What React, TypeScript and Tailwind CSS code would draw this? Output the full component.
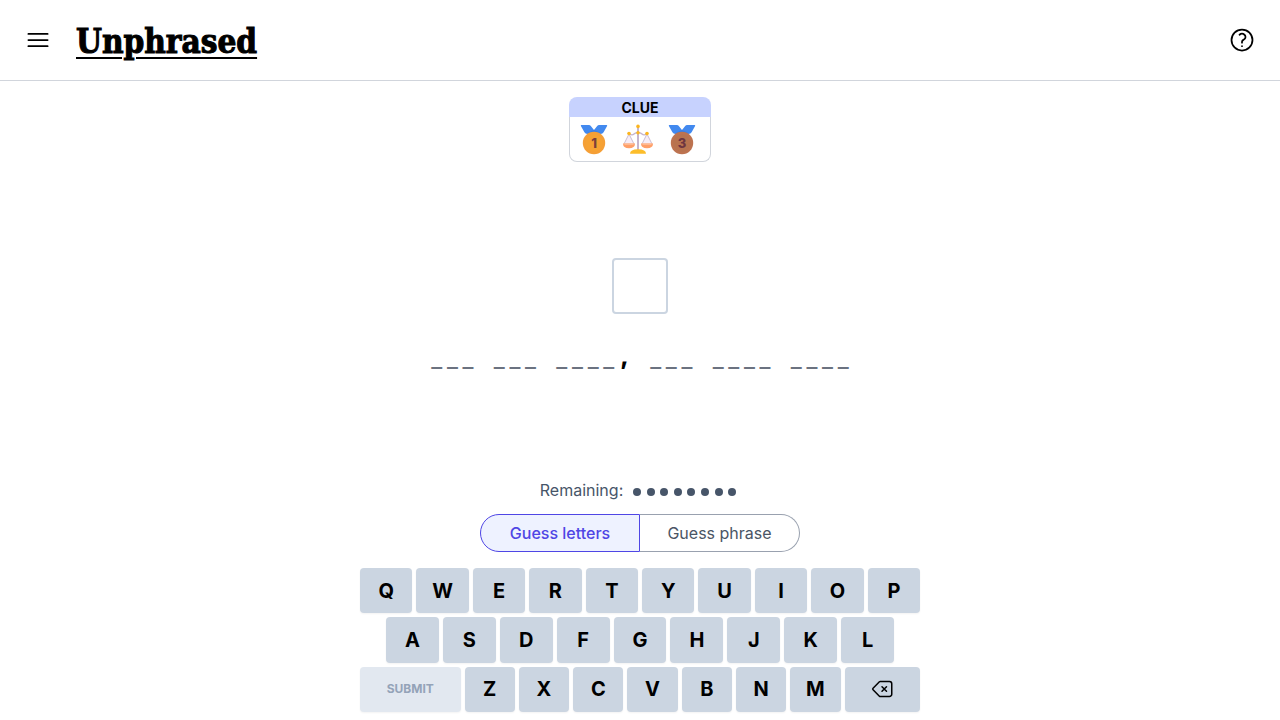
import type { ReactNode } from 'react';

function OutlineIcon({ d, className }: { d: string; className: string }) {
  return (
    <svg viewBox="0 0 24 24" fill="none" stroke="currentColor" strokeWidth="1.5" strokeLinecap="round" strokeLinejoin="round" className={className} aria-hidden="true">
      <path d={d} />
    </svg>
  );
}

const MENU = 'M3.75 6.75h16.5M3.75 12h16.5m-16.5 5.25h16.5';
const HELP =
  'M9.879 7.519c1.171-1.025 3.071-1.025 4.242 0 1.172 1.025 1.172 2.687 0 3.712-.203.179-.43.326-.67.442-.745.361-1.45.999-1.45 1.827v.75M21 12a9 9 0 1 1-18 0 9 9 0 0 1 18 0Zm-9 5.25h.008v.008H12v-.008Z';
const BACKSPACE =
  'M12 9.75 14.25 12m0 0 2.25 2.25M14.25 12l2.25-2.25M14.25 12 12 14.25m-2.58 4.92-6.374-6.375a1.125 1.125 0 0 1 0-1.59L9.42 4.83c.21-.211.497-.33.795-.33H19.5a2.25 2.25 0 0 1 2.25 2.25v10.5a2.25 2.25 0 0 1-2.25 2.25h-9.284c-.298 0-.585-.119-.795-.33Z';

type MedalProps = { place: string; rim: string; face: string; ink: string };

function Medal({ place, rim, face, ink }: MedalProps) {
  return (
    <svg viewBox="0 0 32 32" className="size-8" role="img" aria-label={`Medal ${place}`}>
      <path d="M3.4 2H11q1 0 1.600.8L16 7l3.400-4.200Q20 2 21 2h7.600q.9 0 .5.9l-3.500 6.400Q24.600 11 22.600 11H9.400q-2 0-3-1.700L2.900 2.900Q2.500 2 3.400 2Z" fill="#4289ef" />
      <path d="M10 9.500 16 7l6 2.500-6 2Z" fill="#2f6fd8" opacity=".4" />
      <circle cx="16" cy="20" r="11.200" fill={rim} />
      <circle cx="16" cy="20" r="8.800" fill={face} />
      <text x="16" y="24.600" textAnchor="middle" fontSize="13" fontWeight="800" fill={ink}>{place}</text>
    </svg>
  );
}

function Scales() {
  return (
    <svg viewBox="0 0 32 32" className="size-8" role="img" aria-label="Balance scale">
      <path d="M7 11 2.500 21h9L7 11ZM25 11l-4.500 10h9L25 11Z" fill="#f6edf7" />
      <g fill="none" stroke="#c5b4cc" strokeLinecap="round">
        <path d="M16 4v23" strokeWidth="2" />
        <path d="M7 10.500q3 2.500 5 .500t4-1q2-1 4 1t5-.500" strokeWidth="1.400" />
        <path d="M7 11 2 21M7 11l5 10M25 11l-5 10M25 11l5 10" strokeWidth=".9" />
      </g>
      <path d="M1 20.500h12q0 4.800-6 4.800t-6-4.800ZM19 20.500h12q0 4.800-6 4.800t-6-4.800Z" fill="#ff9f68" />
      <path d="M1.500 20.500h11l-1.500 1.600H3ZM19.500 20.500h11l-1.500 1.600h-8Z" fill="#ffb88f" />
      <path d="M8 30.800q0-4.600 8-4.600t8 4.600Z" fill="#fcbd2a" />
      <circle cx="16" cy="3.400" r="1.800" fill="#fcb51f" />
      <circle cx="16" cy="9.800" r="1.700" fill="#fcb51f" />
      <circle cx="7" cy="10.500" r="1.800" fill="#fcb51f" />
      <circle cx="25" cy="10.500" r="1.800" fill="#fcb51f" />
    </svg>
  );
}

function Key({ children, className = 'flex-1 bg-[#cbd5e1] text-xl text-black', label, disabled }: { children: ReactNode; className?: string; label?: string; disabled?: boolean }) {
  return (
    <button type="button" aria-label={label} disabled={disabled} className={`flex min-w-0 basis-0 items-center justify-center rounded font-bold shadow-xs ${className}`}>
      {children}
    </button>
  );
}

const PHRASE = '___ ___ ____, ___ ____ ____';
const REMAINING = 8;

export default function App() {
  return (
    <div className="flex min-h-screen flex-col bg-white font-['Inter',sans-serif] text-black">
      <header className="flex h-[81px] items-center gap-6 border-b border-gray-300 px-6">
        <button type="button" aria-label="Menu">
          <OutlineIcon d={MENU} className="size-7" />
        </button>
        <h1 className="flex-1 pt-1 font-['DejaVu_Serif_Condensed','DejaVu_Serif',serif] text-[33px] leading-10 font-bold [-webkit-text-stroke:1px_black]">
          <a href="#" className="underline decoration-2 underline-offset-4">Unphrased</a>
        </h1>
        <button type="button" aria-label="How to play">
          <OutlineIcon d={HELP} className="size-7" />
        </button>
      </header>

      <main className="flex flex-1 flex-col items-center px-2 pt-4 pb-2">
        <section>
          <h2 className="h-5 rounded-t-lg bg-[#c7d2fe] text-center text-sm leading-[22px] font-bold">CLUE</h2>
          <div className="flex gap-3 rounded-b-lg border border-t-0 border-gray-300 py-1.5 pr-3 pl-2">
            <Medal place="1" rim="#f59f36" face="#f6a233" ink="#7c3f3a" />
            <Scales />
            <Medal place="3" rim="#bd7350" face="#b8734f" ink="#6e3540" />
          </div>
        </section>

        <section className="flex flex-1 flex-col items-center justify-center gap-7 pb-1.5">
          <input aria-label="Letter guess" maxLength={1} className="size-14 rounded border-2 border-[#cbd5e1] text-center text-2xl font-bold" />
          <p className="grid w-[422px] grid-cols-27 text-center text-2xl leading-[34px] font-extrabold">
            {PHRASE.split('').map((char, i) => (
              <span key={i} className={char === '_' ? 'font-normal text-[#6b7280]' : 'leading-7'}>{char}</span>
            ))}
          </p>
        </section>

        <div className="flex items-center gap-2.5 pr-1 leading-6 text-[#475569]">
          <span>Remaining:</span>
          <span className="flex w-[103px] justify-between pt-1" role="img" aria-label="8 guesses">
            {Array.from({ length: REMAINING }, (_, i) => (
              <span key={i} className="size-2 rounded-full bg-[#475569]" />
            ))}
          </span>
        </div>

        <div className="mt-3 grid h-[38px] w-full max-w-80 grid-cols-2">
          <button type="button" aria-pressed="true" className="rounded-l-full border border-[#4f46e5] bg-[#eef2ff] font-medium text-[#4f46e5]">Guess letters</button>
          <button type="button" aria-pressed="false" className="rounded-r-full border border-l-0 border-gray-400 text-gray-600">Guess phrase</button>
        </div>

        <div className="mt-4 grid h-36 w-full max-w-[560px] grid-rows-3 gap-1">
          <div className="flex gap-1">
            {'QWERTYUIOP'.split('').map((k) => <Key key={k}>{k}</Key>)}
          </div>
          <div className="flex gap-1 px-[26px]">
            {'ASDFGHJKL'.split('').map((k) => <Key key={k}>{k}</Key>)}
          </div>
          <div className="flex gap-1">
            <Key disabled className="flex-2 bg-[#e2e8f0] text-xs text-[#94a3b8]">SUBMIT</Key>
            {'ZXCVBNM'.split('').map((k) => <Key key={k}>{k}</Key>)}
            <Key label="Backspace" className="flex-[1.5] bg-[#cbd5e1]">
              <OutlineIcon d={BACKSPACE} className="size-6" />
            </Key>
          </div>
        </div>
      </main>
    </div>
  );
}
